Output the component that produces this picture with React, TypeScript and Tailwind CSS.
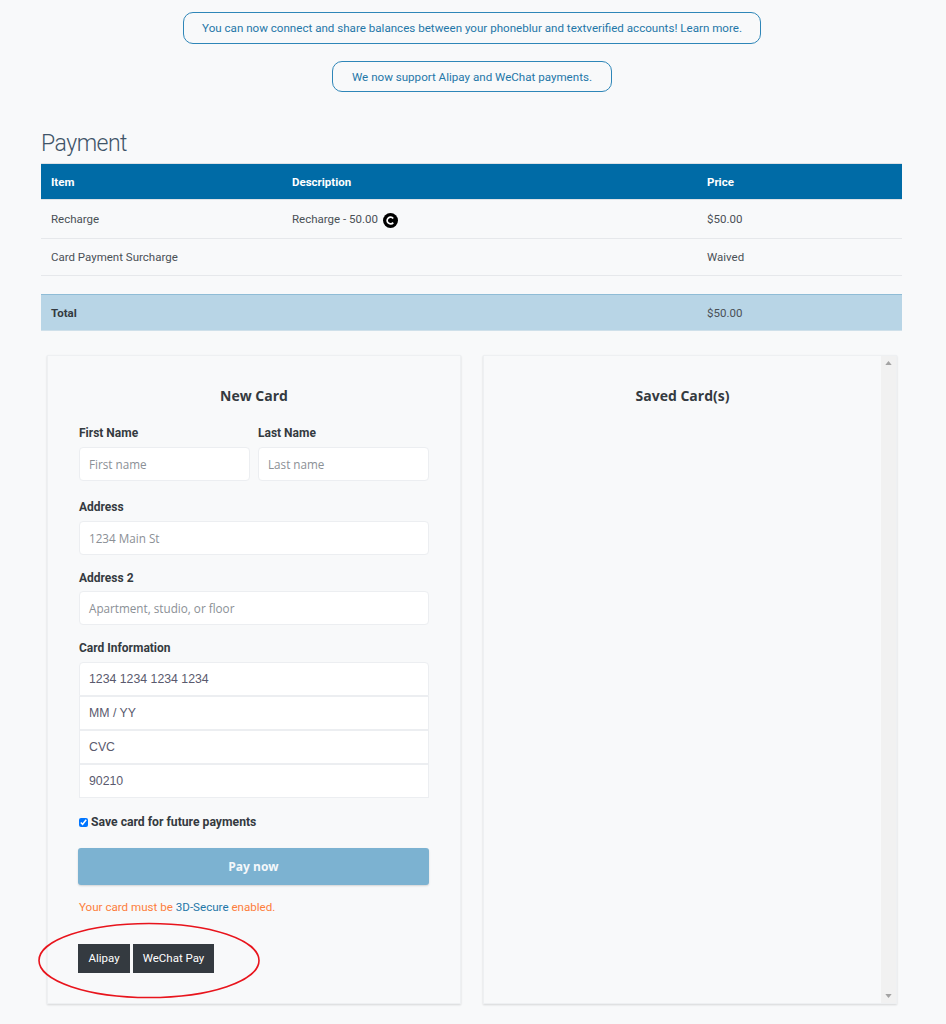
const roboto = "font-['Roboto',sans-serif]";
const open = "font-['Open_Sans',sans-serif]";

function Banner({ text, className }: { text: string; className: string }) {
  return (
    <div className={`flex items-center justify-center rounded-[10px] border border-[#2e86b8] pt-[2px] text-[11.6px] whitespace-nowrap text-[#1f77a8] ${className}`}>
      {text}
    </div>
  );
}

function Field({ label, placeholder, className = "", labelGap = "mb-[5px]" }: { label: string; placeholder: string; className?: string; labelGap?: string }) {
  return (
    <div className={className}>
      <div className={`h-[18px] text-[12px] font-bold leading-[18px] text-[#343a40] ${labelGap} ${roboto}`}>{label}</div>
      <div className="flex h-[34px] items-center rounded-[4px] border border-[#eceef1] bg-white pl-[9px] pt-px text-[11.7px] text-[#8b9096]">
        {placeholder}
      </div>
    </div>
  );
}

function CardLine({ text, extra = "" }: { text: string; extra?: string }) {
  return (
    <div className={`flex h-[34px] items-center border border-[#eceef1] bg-white pl-[9px] pt-px font-['Liberation_Sans',sans-serif] text-[12.3px] text-[#5a5a6e] ${extra}`}>
      {text}
    </div>
  );
}

export default function App() {
  return (
    <div className={`relative h-[1024px] w-[946px] overflow-hidden bg-[#f8f9fa] ${open}`}>
      <div className={`flex flex-col items-center pt-3 pr-[2px] ${roboto}`}>
        <Banner className="h-[32px] w-[578px]" text="You can now connect and share balances between your phoneblur and textverified accounts! Learn more." />
        <Banner className="mt-[17px] h-[31px] w-[280px]" text="We now support Alipay and WeChat payments." />
      </div>

      <div className={`ml-[41px] mt-[37px] w-[861px] ${roboto}`}>
        <h1 className="h-[34px] text-[23px] font-light leading-[30px] tracking-[-0.5px] text-[#3f5468]">Payment</h1>
        <div className="text-[11.5px] text-[#4a5056]">
          <div className="grid h-[37px] grid-cols-[241px_415px_1fr] items-center border-y border-[#dee2e6] bg-[#006ba6] pl-[10px] pt-[2px] font-bold text-white">
            <span>Item</span><span>Description</span><span>Price</span>
          </div>
          <div className="grid h-[39px] grid-cols-[241px_415px_1fr] items-center border-b border-[#e6e8eb] pl-[10px] pt-[2px]">
            <span>Recharge</span>
            <span className="flex items-center gap-[5px]">
              Recharge - 50.00
              <svg width="15" height="15" viewBox="0 0 15 15">
                <circle cx="7.5" cy="7.5" r="7.5" fill="#000" />
                <path d="M10.2 5.4A3.4 3.4 0 1 0 10.2 9.6" fill="none" stroke="#fff" strokeWidth="1.7" />
              </svg>
            </span>
            <span>$50.00</span>
          </div>
          <div className="grid h-[37px] grid-cols-[241px_415px_1fr] items-center border-b border-[#e6e8eb] pl-[10px] pt-[2px]">
            <span>Card Payment Surcharge</span><span /><span>Waived</span>
          </div>
          <div className="mt-[18px] grid h-[37px] grid-cols-[241px_415px_1fr] items-center border-y border-t-[#8fbcd6] border-b-[#cfe0ea] bg-[#b8d5e6] pl-[10px] pt-[2px]">
            <span className="font-bold text-[#343a40]">Total</span><span /><span>$50.00</span>
          </div>
        </div>
      </div>

      <div className="mx-[47px] mt-[24px] flex gap-[22px]">
        <section className="h-[649px] w-[414px] border border-[#eef0f2] bg-[#f8f9fa] px-[31px] pt-[30px] shadow-[0_1px_2px_rgba(0,0,0,0.14)]">
          <h2 className="text-center text-[14px] font-bold leading-[20px] text-[#343a40]">New Card</h2>
          <div className="mt-[18px] flex gap-2">
            <Field className="w-[171px]" label="First Name" placeholder="First name" />
            <Field className="w-[171px]" label="Last Name" placeholder="Last name" />
          </div>
          <Field className="mt-[17px]" label="Address" placeholder="1234 Main St" />
          <Field className="mt-[14px]" labelGap="mb-[4px]" label="Address 2" placeholder="Apartment, studio, or floor" />
          <div className={`mt-[14px] mb-[5px] h-[18px] text-[12px] font-bold leading-[18px] text-[#343a40] ${roboto}`}>Card Information</div>
          <CardLine extra="rounded-t-[4px]" text="1234 1234 1234 1234" />
          <CardLine text="MM / YY" />
          <CardLine text="CVC" />
          <CardLine text="90210" />
          <label className={`mt-[16px] flex h-[16px] items-center gap-[3px] text-[12.2px] font-bold text-[#343a40] ${roboto}`}>
            <input type="checkbox" defaultChecked readOnly className="m-0 h-[9px] w-[9px] accent-[#0075ff]" />
            Save card for future payments
          </label>
          <button className="mt-[18px] -ml-px h-[37px] w-[351px] rounded-[3px] bg-[#7cb2d1] text-[12px] font-bold text-[#f4f8fb] shadow-[0_1px_2px_rgba(0,0,0,0.15)]">
            Pay now
          </button>
          <p className={`mt-[13px] text-[11.6px] leading-[18px] text-[#fd7e3c] ${roboto}`}>
            Your card must be <span className="text-[#1f77a8]">3D-Secure</span> enabled.
          </p>
          <div className={`mt-[28px] -ml-px flex gap-[3px] ${roboto}`}>
            <button className="h-[29px] w-[52px] border border-[#343a40] bg-[#343a40] text-[11.5px] text-white">Alipay</button>
            <button className="h-[29px] w-[81px] border border-[#343a40] bg-[#343a40] text-[11.5px] text-white">WeChat Pay</button>
          </div>
        </section>

        <section className="flex h-[649px] w-[414px] border border-[#eef0f2] bg-[#f8f9fa] shadow-[0_1px_2px_rgba(0,0,0,0.14)]">
          <h2 className="flex-1 pt-[30px] text-center text-[14px] font-bold leading-[20px] text-[#343a40]">Saved Card(s)</h2>
          <div className="flex w-[15px] flex-col items-center justify-between bg-[#f1f1f1] py-[5px]">
            <svg width="7" height="4" viewBox="0 0 8 5"><path d="M4 0 8 5H0z" fill="#a3a3a3" /></svg>
            <svg width="7" height="4" viewBox="0 0 8 5"><path d="M0 0H8L4 5z" fill="#a3a3a3" /></svg>
          </div>
        </section>
      </div>

      <svg className="absolute left-[38px] top-[922px]" width="224" height="78" viewBox="0 0 224 78">
        <ellipse cx="111" cy="38.5" rx="110" ry="37" fill="none" stroke="#e8141c" strokeWidth="1.6" />
      </svg>
    </div>
  );
}
